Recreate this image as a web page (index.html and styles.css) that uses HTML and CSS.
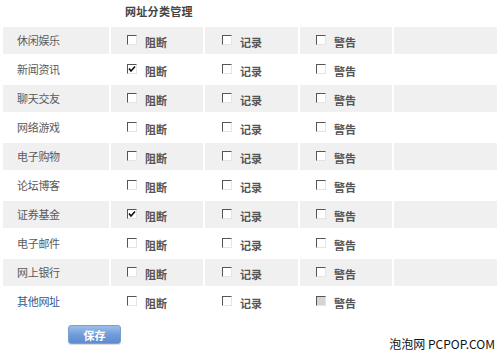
FILE: index.html
```html
<html>
<head>
    <title>网址分类管理</title>
    <meta charset="utf-8">
    <link rel="stylesheet" href="styles.css">
</head>
<body>
<div class="page">
    <div class="title">网址分类管理</div>
    <table class="rules">
        <tr class="shade">
            <td class="name">休闲娱乐</td>
            <td><span class="box"></span><span class="opt">阻断</span></td>
            <td><span class="box"></span><span class="opt">记录</span></td>
            <td><span class="box"></span><span class="opt">警告</span></td>
            <td></td>
        </tr>
        <tr>
            <td class="name">新闻资讯</td>
            <td><span class="box checked"><svg viewBox="0 0 8 8" width="8" height="8"><path d="M1 3.5 L3 6 L7 1.5" fill="none" stroke="#111" stroke-width="1.6"/></svg></span><span class="opt">阻断</span></td>
            <td><span class="box"></span><span class="opt">记录</span></td>
            <td><span class="box"></span><span class="opt">警告</span></td>
            <td></td>
        </tr>
        <tr class="shade">
            <td class="name">聊天交友</td>
            <td><span class="box"></span><span class="opt">阻断</span></td>
            <td><span class="box"></span><span class="opt">记录</span></td>
            <td><span class="box"></span><span class="opt">警告</span></td>
            <td></td>
        </tr>
        <tr>
            <td class="name">网络游戏</td>
            <td><span class="box"></span><span class="opt">阻断</span></td>
            <td><span class="box"></span><span class="opt">记录</span></td>
            <td><span class="box"></span><span class="opt">警告</span></td>
            <td></td>
        </tr>
        <tr class="shade">
            <td class="name">电子购物</td>
            <td><span class="box"></span><span class="opt">阻断</span></td>
            <td><span class="box"></span><span class="opt">记录</span></td>
            <td><span class="box"></span><span class="opt">警告</span></td>
            <td></td>
        </tr>
        <tr>
            <td class="name">论坛博客</td>
            <td><span class="box"></span><span class="opt">阻断</span></td>
            <td><span class="box"></span><span class="opt">记录</span></td>
            <td><span class="box"></span><span class="opt">警告</span></td>
            <td></td>
        </tr>
        <tr class="shade">
            <td class="name">证券基金</td>
            <td><span class="box checked"><svg viewBox="0 0 8 8" width="8" height="8"><path d="M1 3.5 L3 6 L7 1.5" fill="none" stroke="#111" stroke-width="1.6"/></svg></span><span class="opt">阻断</span></td>
            <td><span class="box"></span><span class="opt">记录</span></td>
            <td><span class="box"></span><span class="opt">警告</span></td>
            <td></td>
        </tr>
        <tr>
            <td class="name">电子邮件</td>
            <td><span class="box"></span><span class="opt">阻断</span></td>
            <td><span class="box"></span><span class="opt">记录</span></td>
            <td><span class="box"></span><span class="opt">警告</span></td>
            <td></td>
        </tr>
        <tr class="shade">
            <td class="name">网上银行</td>
            <td><span class="box"></span><span class="opt">阻断</span></td>
            <td><span class="box"></span><span class="opt">记录</span></td>
            <td><span class="box"></span><span class="opt">警告</span></td>
            <td></td>
        </tr>
        <tr>
            <td class="name other">其他网址</td>
            <td><span class="box"></span><span class="opt">阻断</span></td>
            <td><span class="box"></span><span class="opt">记录</span></td>
            <td><span class="box disabled"></span><span class="opt">警告</span></td>
            <td></td>
        </tr>
    </table>
    <div class="footer">
        <button class="save">保存</button>
        <span class="mark">泡泡网 PCPOP.COM</span>
    </div>
</div>
</body>
</html>
```

FILE: styles.css
```css
body {
    margin: 0;
    background: #ffffff;
    font-family: "Noto Sans CJK SC", "DejaVu Sans", sans-serif;
    font-size: 11px;
    color: #555555;
}

.page {
    width: 500px;
    height: 358px;
    padding-left: 1px;
    box-sizing: border-box;
}

.title {
    height: 25px;
    padding-left: 124px;
    line-height: 22px;
    font-weight: bold;
    color: #444444;
    letter-spacing: 0.3px;
}

.rules {
    border-collapse: separate;
    border-spacing: 2px;
    margin: 0;
    font-family: "Noto Sans CJK SC", "DejaVu Sans", sans-serif;
    font-size: 11px;
}

.rules td {
    height: 27px;
    padding: 0 0 0 16px;
    box-sizing: border-box;
    width: 92px;
    vertical-align: middle;
    white-space: nowrap;
}

.rules td.name {
    width: 106px;
    padding-left: 14px;
    padding-bottom: 2px;
    color: #5a5a5a;
    letter-spacing: -0.3px;
}

.rules td:nth-child(3) {
    width: 93px;
    padding-left: 17px;
}

.rules td:last-child {
    width: 103px;
}

.rules tr.shade td {
    background: #f0f0f0;
}

.rules td.other {
    color: #2d5b97;
}

.box {
    display: inline-block;
    width: 10px;
    height: 10px;
    box-sizing: border-box;
    border-top: 1px solid #555555;
    border-left: 1px solid #555555;
    border-right: 1px solid #e4e4e4;
    border-bottom: 1px solid #e4e4e4;
    background: #ffffff;
    vertical-align: middle;
    position: relative;
    top: -1px;
}

.box svg {
    display: block;
    margin: 0;
}

.box.disabled {
    background: #d4d4d0;
}

.opt {
    margin-left: 8px;
    color: #555555;
    font-weight: bold;
    vertical-align: middle;
    position: relative;
    top: 1px;
}

.footer {
    display: flex;
    justify-content: space-between;
    align-items: flex-start;
    padding: 6px 5px 0 67px;
}

.save {
    width: 53px;
    height: 19px;
    padding: 0;
    border: 1px solid #7a9fd0;
    border-radius: 3px;
    background: linear-gradient(#9bbde8 0%, #6f9ad8 55%, #5f8bcf 100%);
    color: #ffffff;
    font-family: "Noto Sans CJK SC", sans-serif;
    font-size: 11px;
    font-weight: bold;
    margin-top: 2px;
    box-shadow: 0 1px 1px rgba(0, 0, 0, 0.15);
}

.mark {
    margin-top: 14px;
    font-family: "Noto Sans CJK SC", "DejaVu Sans", sans-serif;
    font-size: 12px;
    line-height: 14px;
    color: #111111;
}
```
